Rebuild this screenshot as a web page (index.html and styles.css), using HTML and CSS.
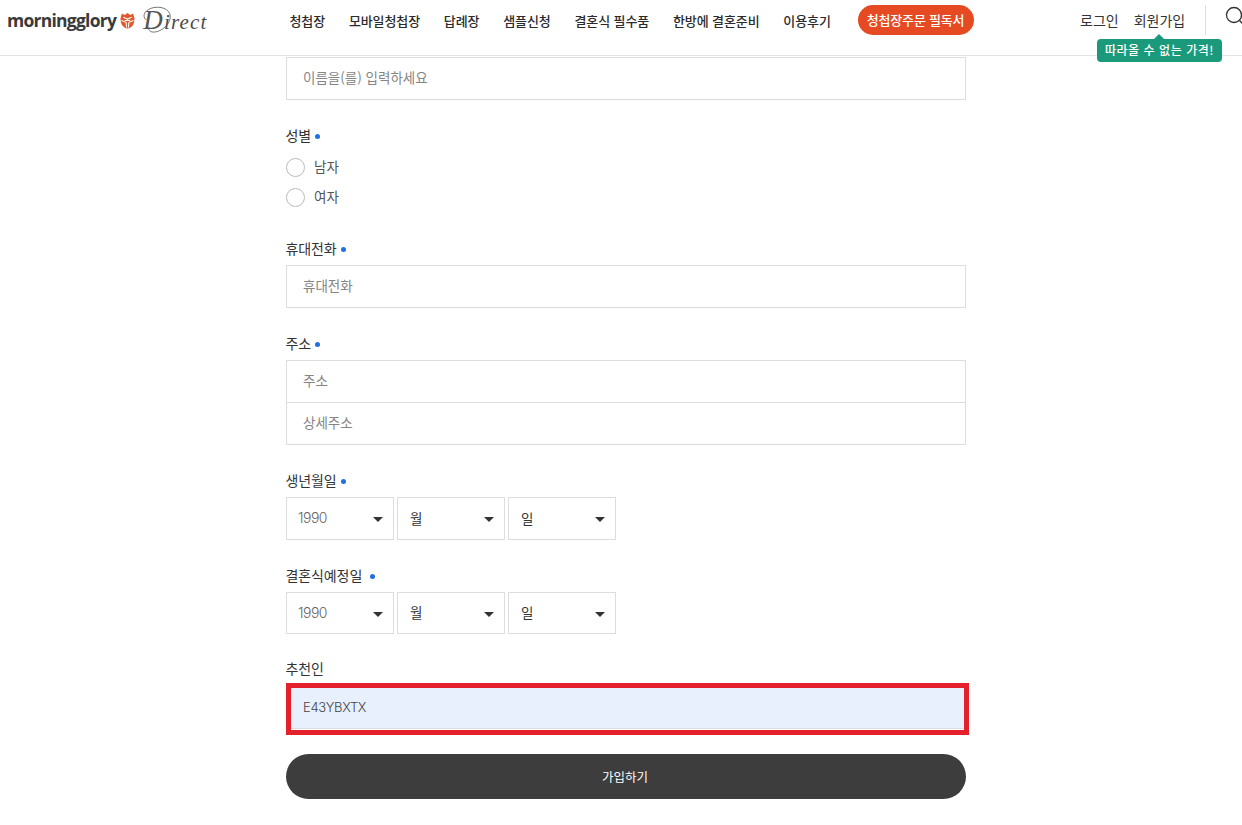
FILE: index.html
```html
<!DOCTYPE html>
<html lang="ko">
<head>
<meta charset="utf-8">
<title>회원가입</title>
<link rel="stylesheet" href="styles.css">
</head>
<body>
<header class="site-header">
  <a class="logo" href="#">
    <span class="logo-word">morningglory</span>
    <svg class="logo-mark" viewBox="0 0 16 18" width="15" height="17" aria-hidden="true">
      <path d="M2 1.5 L5 3 L8 1 L11 3 L14 1.5 L15.5 7 L15 11 C14 15 11 17 8 17.5 C5 17 2 15 1 11 L0.5 7 Z" fill="#e2572b"/>
      <path d="M3.5 5.5 L8 7.5 L12.5 5.5 M1.5 9 L6.5 11 L7 16.5 M14.5 9 L9.5 11 L9 16.5 M5 9 L11 9" fill="none" stroke="#fff" stroke-width="1.1"/>
    </svg>
    <span class="logo-script"><span class="logo-cap">D</span>irect</span>
    <svg class="logo-swash" viewBox="0 0 34 28" width="34" height="28" aria-hidden="true">
      <path d="M5 14 C0 9 5 3 13 1.5 C23 0 31 5 29 13 C27 21 18 27 11 26 C8 25 7 23 8 21" fill="none" stroke="#555" stroke-width="0.8"/>
    </svg>
  </a>
  <nav class="main-nav">
    <a href="#">청첩장</a>
    <a href="#">모바일청첩장</a>
    <a href="#">답례장</a>
    <a href="#">샘플신청</a>
    <a href="#">결혼식 필수품</a>
    <a href="#">한방에 결혼준비</a>
    <a href="#">이용후기</a>
    <a href="#" class="nav-cta">청첩장주문 필독서</a>
  </nav>
  <div class="user-nav">
    <a href="#">로그인</a>
    <a href="#">회원가입</a>
    <span class="divider"></span>
    <svg class="search" viewBox="0 0 20 20" width="20" height="20" aria-hidden="true">
      <circle cx="9" cy="9" r="7.5" fill="none" stroke="#333" stroke-width="1.3"/>
      <path d="M14.5 14.5 L19 19" stroke="#333" stroke-width="1.3" fill="none"/>
    </svg>
  </div>
  <div class="tooltip">따라올 수 없는 가격!</div>
</header>

<main class="form">
  <div class="field">
    <div class="input placeholder">이름을(를) 입력하세요</div>
  </div>

  <div class="field">
    <div class="label">성별<span class="dot"></span></div>
    <div class="radios">
      <div class="radio"><span class="circle"></span><span class="radio-text">남자</span></div>
      <div class="radio"><span class="circle"></span><span class="radio-text">여자</span></div>
    </div>
  </div>

  <div class="field">
    <div class="label">휴대전화<span class="dot"></span></div>
    <div class="input placeholder">휴대전화</div>
  </div>

  <div class="field">
    <div class="label">주소<span class="dot"></span></div>
    <div class="input placeholder">주소</div>
    <div class="input placeholder joined">상세주소</div>
  </div>

  <div class="field">
    <div class="label">생년월일<span class="dot"></span></div>
    <div class="selects">
      <div class="select year">1990</div>
      <div class="select">월</div>
      <div class="select">일</div>
    </div>
  </div>

  <div class="field tight">
    <div class="label">결혼식예정일<span class="dot wide"></span></div>
    <div class="selects short">
      <div class="select year">1990</div>
      <div class="select">월</div>
      <div class="select">일</div>
    </div>
  </div>

  <div class="field tight">
    <div class="label">추천인</div>
    <div class="highlight-wrap">
      <div class="input filled">E43YBXTX</div>
      <div class="highlight"></div>
    </div>
  </div>

  <button class="submit" type="button">가입하기</button>
</main>
</body>
</html>
```
FILE: styles.css
```css
* { box-sizing: border-box; }

html, body {
  margin: 0;
  padding: 0;
  background: #fff;
  color: #333;
  font-family: "Noto Sans CJK KR", "Noto Sans", sans-serif;
  overflow: hidden;
}

a { color: inherit; text-decoration: none; }

.site-header {
  position: relative;
  display: flex;
  align-items: flex-start;
  height: 56px;
  padding-left: 7px;
  border-bottom: 1px solid #e4e4e4;
}

.logo {
  position: relative;
  display: flex;
  align-items: center;
  width: 282.5px;
  height: 40px;
  flex: none;
}

.logo-word {
  font-family: "Open Sans", sans-serif;
  font-weight: 700;
  font-size: 17.5px;
  letter-spacing: -0.75px;
  color: #3a3a3a;
}

.logo-mark { margin-left: 4px; flex: none; }

.logo-script {
  margin-left: 8px;
  font-family: "Liberation Serif", serif;
  font-style: italic;
  font-size: 21px;
  line-height: 1;
  letter-spacing: 1.2px;
  color: #4a4a4a;
}

.logo-cap {
  font-size: 27px;
  margin-right: 0;
  color: #555;
}

.logo-swash {
  position: absolute;
  top: 6px;
  left: 134px;
}

.main-nav {
  display: flex;
  align-items: center;
  gap: 23.8px;
  height: 40px;
  font-size: 13px;
  font-weight: 500;
  letter-spacing: -0.1px;
  color: #2b2b2b;
  white-space: nowrap;
}

.main-nav .nav-cta {
  margin-left: 3px;
  width: 116px;
  height: 30px;
  line-height: 30px;
  text-align: center;
  border-radius: 15px;
  background: #e64a22;
  color: #fff;
  letter-spacing: -0.2px;
}

.user-nav {
  position: absolute;
  top: 5px;
  left: 1080px;
  display: flex;
  align-items: center;
  height: 30px;
  font-size: 14px;
  color: #333;
  white-space: nowrap;
}

.user-nav a + a { margin-left: 15px; }

.divider {
  width: 1px;
  height: 30px;
  margin-left: 20px;
  background: #ddd;
}

.search {
  margin-left: 19px;
  margin-top: -8px;
  flex: none;
}

.tooltip {
  position: absolute;
  top: 39px;
  left: 1097px;
  width: 125px;
  height: 23px;
  line-height: 21px;
  text-align: center;
  background: #1a9a7b;
  border-radius: 4px;
  color: #fff;
  font-size: 12px;
  font-weight: 500;
  letter-spacing: 0.55px;
  white-space: nowrap;
}

.tooltip::before {
  content: "";
  position: absolute;
  top: -5px;
  left: 57px;
  border-left: 5px solid transparent;
  border-right: 5px solid transparent;
  border-bottom: 5px solid #1a9a7b;
}

.form {
  width: 680px;
  margin: 0 0 0 286px;
  padding-top: 1px;
}

.field { margin-bottom: 26px; }
.field.tight { margin-bottom: 25px; }

.label {
  display: flex;
  align-items: center;
  height: 20px;
  margin-bottom: 6px;
  margin-left: -0.5px;
  padding-bottom: 2px;
  font-size: 14px;
  letter-spacing: -0.1px;
  color: #333;
}

.dot {
  width: 5px;
  height: 5px;
  margin-left: 4px;
  margin-top: 2px;
  border-radius: 50%;
  background: #1f6fe5;
}

.dot.wide { margin-left: 8px; }

.input {
  display: flex;
  align-items: center;
  height: 43px;
  padding-left: 16px;
  padding-bottom: 3px;
  border: 1px solid #ddd;
  font-size: 13.5px;
}

.input.joined { margin-top: -1px; }
.placeholder { color: #858585; }

.radios {
  display: flex;
  flex-direction: column;
  gap: 10px;
  padding-top: 5px;
  padding-bottom: 6px;
}

.radio {
  display: flex;
  align-items: center;
  height: 20px;
  font-size: 13.5px;
  color: #555;
}

.radio-text { padding-bottom: 3px; }

.circle {
  width: 19px;
  height: 19px;
  margin-right: 9px;
  border: 1px solid #bbb;
  border-radius: 50%;
}

.selects {
  display: flex;
  gap: 3px;
}

.select {
  position: relative;
  display: flex;
  align-items: center;
  width: 108px;
  height: 43px;
  padding-left: 12px;
  padding-bottom: 2px;
  border: 1px solid #ddd;
  font-size: 13.5px;
  color: #333;
}

.selects.short .select { height: 42px; }

.select.year {
  font-family: "Inter", sans-serif;
  font-weight: 300;
  font-size: 14px;
  padding-left: 11px;
  color: #666;
  letter-spacing: -0.5px;
}

.select::after {
  content: "";
  position: absolute;
  top: 19px;
  right: 10px;
  border-left: 5px solid transparent;
  border-right: 5px solid transparent;
  border-top: 5px solid #333;
}

.highlight-wrap {
  position: relative;
}

.input.filled {
  height: 44px;
  padding-bottom: 0;
  background: #e8f0fe;
  font-family: "Inter", sans-serif;
  font-weight: 300;
  font-size: 13px;
  letter-spacing: -0.35px;
  color: #444;
}

.highlight {
  position: absolute;
  top: -2px;
  left: 0;
  width: 683px;
  height: 52px;
  border: 5px solid #e3202c;
}

.submit {
  display: block;
  width: 680px;
  height: 45px;
  padding: 0 2px 1px 0;
  border: 0;
  border-radius: 23px;
  background: #3d3d3d;
  color: #fff;
  font-family: inherit;
  font-size: 12.5px;
  font-weight: 400;
}
```
